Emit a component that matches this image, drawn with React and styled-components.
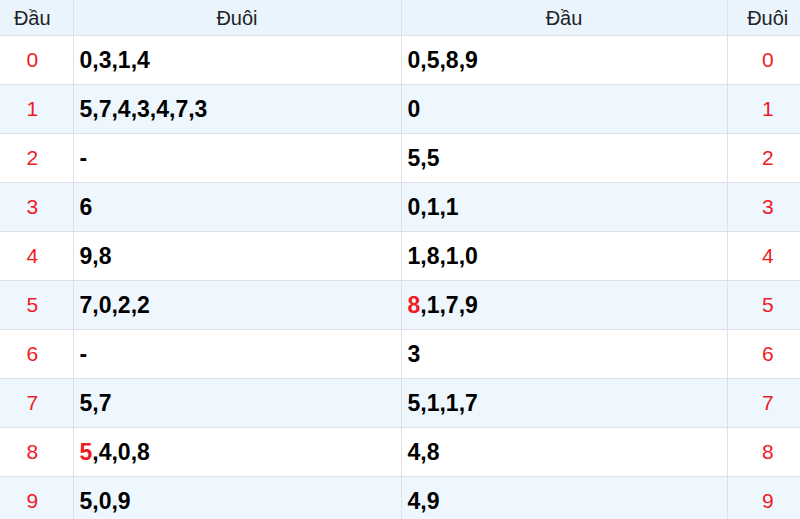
import React from 'react';
import styled, { createGlobalStyle } from 'styled-components';

const Global = createGlobalStyle`
  body {
    margin: 0;
    background: #fff;
    font-family: "Liberation Sans", Arial, sans-serif;
  }
`;

const Table = styled.table`
  width: 800px;
  border-collapse: collapse;
  table-layout: fixed;
`;

const Head = styled.th`
  height: 35px;
  padding: 0;
  background: #eaf4fd;
  border: 1px solid #dde1e6;
  border-top: none;
  font-weight: normal;
  font-size: 20px;
  line-height: 20px;
  color: #222;
  text-align: center;
  vertical-align: middle;
  &:first-child { border-left: none; padding-right: 8px; }
  &:last-child { border-right: none; padding-left: 8px; }
`;

const Row = styled.tr`
  background: ${p => (p.$odd ? '#eef6fe' : '#fff')};
`;

const Cell = styled.td`
  height: 48px;
  padding: 0 6px;
  border: 1px solid #dde1e6;
  font-size: ${p => (p.$key ? '21px' : '23px')};
  color: ${p => (p.$key ? '#ee1c25' : '#000')};
  font-weight: ${p => (p.$key ? 'normal' : 'bold')};
  text-align: ${p => (p.$key ? 'center' : 'left')};
  vertical-align: middle;
  &:first-child { border-left: none; padding-left: 0; padding-right: 8px; }
  &:last-child { border-right: none; padding-right: 0; padding-left: 8px; }
`;

const Hot = styled.span`
  color: #ee1c25;
`;

const rows = [
  ['0,3,1,4', '0,5,8,9'],
  ['5,7,4,3,4,7,3', '0'],
  ['-', '5,5'],
  ['6', '0,1,1'],
  ['9,8', '1,8,1,0'],
  ['7,0,2,2', '*8,1,7,9'],
  ['-', '3'],
  ['5,7', '5,1,1,7'],
  ['*5,4,0,8', '4,8'],
  ['5,0,9', '4,9'],
];

function Nums({ value }) {
  if (value.startsWith('*')) {
    const [first, ...rest] = value.slice(1).split(',');
    return (
      <>
        <Hot>{first}</Hot>,{rest.join(',')}
      </>
    );
  }
  return value;
}

export default function App() {
  return (
    <>
      <Global />
      <Table>
        <colgroup>
          <col style={{ width: 73 }} />
          <col style={{ width: 328 }} />
          <col style={{ width: 326 }} />
          <col style={{ width: 73 }} />
        </colgroup>
        <thead>
          <tr>
            <Head>Đầu</Head>
            <Head>Đuôi</Head>
            <Head>Đầu</Head>
            <Head>Đuôi</Head>
          </tr>
        </thead>
        <tbody>
          {rows.map(([tail, head], i) => (
            <Row key={i} $odd={i % 2 === 1}>
              <Cell $key>{i}</Cell>
              <Cell><Nums value={tail} /></Cell>
              <Cell><Nums value={head} /></Cell>
              <Cell $key>{i}</Cell>
            </Row>
          ))}
        </tbody>
      </Table>
    </>
  );
}
